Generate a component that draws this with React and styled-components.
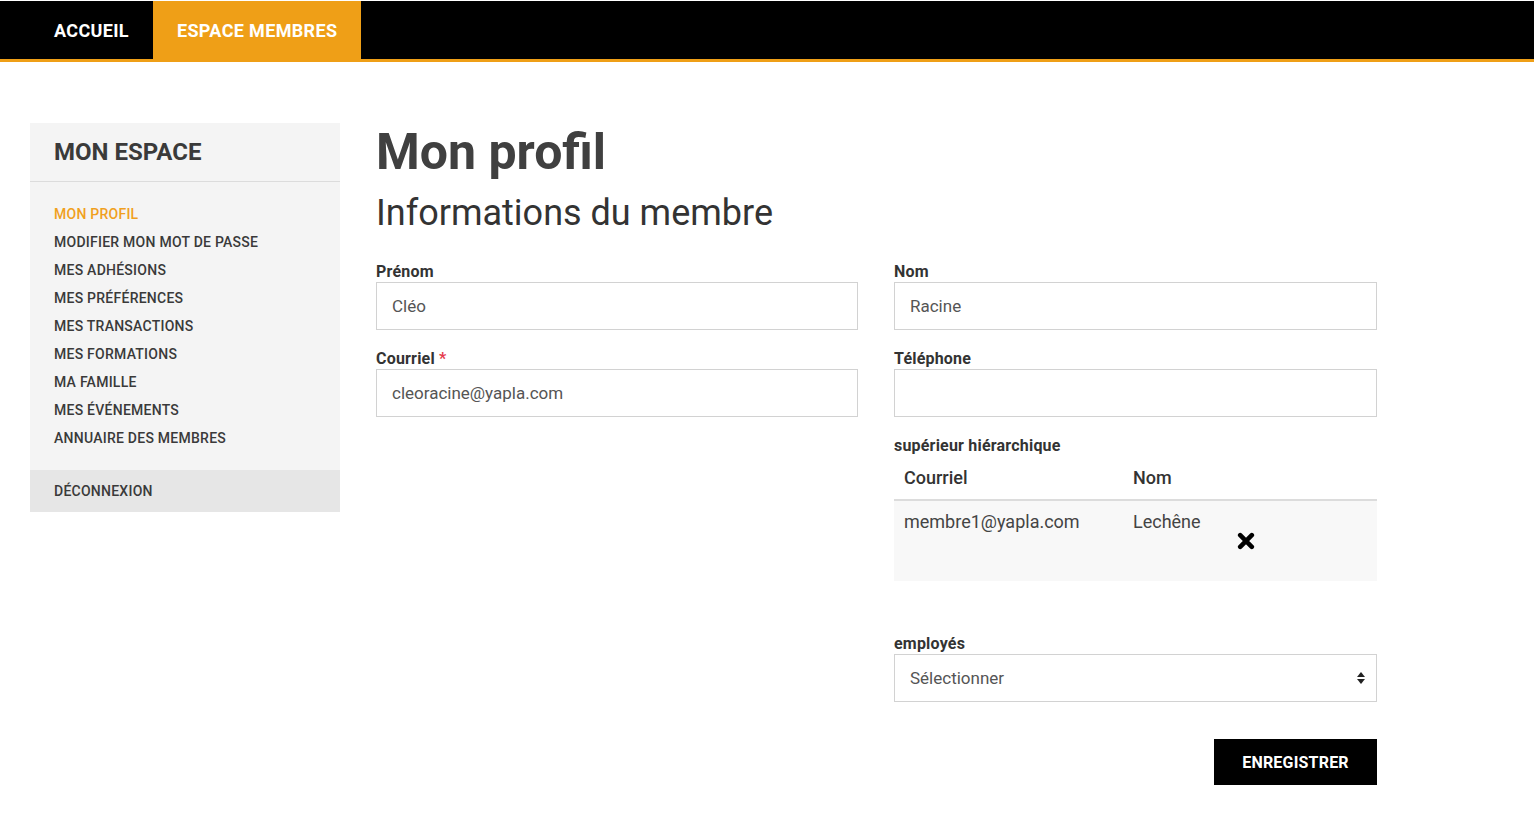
import React from "react";
import styled, { createGlobalStyle } from "styled-components";

const GlobalStyle = createGlobalStyle`
  body {
    margin: 0;
    font-family: Roboto, "Liberation Sans", Arial, sans-serif;
    color: #333;
    background: #fff;
  }
  * { box-sizing: border-box; }
`;

const menuItems = [
  "Mon profil",
  "Modifier mon mot de passe",
  "Mes adhésions",
  "Mes préférences",
  "Mes transactions",
  "Mes formations",
  "Ma famille",
  "Mes événements",
  "Annuaire des membres",
];

const App = () => {
  return (
    <>
      <GlobalStyle />
      <NavBar>
        <NavLink>Accueil</NavLink>
        <NavLink active>Espace membres</NavLink>
      </NavBar>
      <Page>
        <Sidebar>
          <SidebarTitle>Mon espace</SidebarTitle>
          <Menu>
            {menuItems.map((item, i) => (
              <MenuItem key={item} active={i === 0}>
                {item}
              </MenuItem>
            ))}
          </Menu>
          <Logout>Déconnexion</Logout>
        </Sidebar>

        <Main>
          <Title>Mon profil</Title>
          <Subtitle>Informations du membre</Subtitle>
          <FormGrid>
            <Column>
              <Field>
                <Label>Prénom</Label>
                <Input defaultValue="Cléo" />
              </Field>
              <Field>
                <Label>
                  Courriel <Required>*</Required>
                </Label>
                <Input defaultValue="cleoracine@yapla.com" />
              </Field>
            </Column>
            <Column>
              <Field>
                <Label>Nom</Label>
                <Input defaultValue="Racine" />
              </Field>
              <Field>
                <Label>Téléphone</Label>
                <Input defaultValue="" />
              </Field>
              <Field>
                <Label>supérieur hiérarchique</Label>
                <Table>
                  <TableHead>
                    <Cell>Courriel</Cell>
                    <Cell>Nom</Cell>
                    <Cell />
                  </TableHead>
                  <TableRow>
                    <Cell>membre1@yapla.com</Cell>
                    <Cell>Lechêne</Cell>
                    <Cell>
                      <RemoveButton aria-label="Supprimer">
                        <svg width="18" height="18" viewBox="0 0 18 18">
                          <path
                            d="M3.2 3.2 L14.8 14.8 M14.8 3.2 L3.2 14.8"
                            stroke="#000"
                            strokeWidth="4.6"
                            strokeLinecap="round"
                          />
                        </svg>
                      </RemoveButton>
                    </Cell>
                  </TableRow>
                </Table>
              </Field>
              <Field spaced>
                <Label>employés</Label>
                <SelectWrap>
                  <Select defaultValue="">
                    <option value="">Sélectionner</option>
                  </Select>
                  <SelectArrows width="8" height="12" viewBox="0 0 8 12">
                    <path d="M4 0 L8 5 L0 5 Z" fill="#222" />
                    <path d="M0 7 L8 7 L4 12 Z" fill="#222" />
                  </SelectArrows>
                </SelectWrap>
              </Field>
              <Actions>
                <SaveButton>Enregistrer</SaveButton>
              </Actions>
            </Column>
          </FormGrid>
        </Main>
      </Page>
    </>
  );
};

const NavBar = styled.nav`
  display: flex;
  margin-top: 1px;
  height: 61px;
  padding-left: 30px;
  background: #000;
  border-bottom: 3px solid #ef9f17;
`;

const NavLink = styled.a`
  display: flex;
  align-items: center;
  padding: 0 24px;
  font-size: 18px;
  font-weight: 700;
  letter-spacing: 0.35px;
  text-transform: uppercase;
  color: #fff;
  background: ${(p) => (p.active ? "#ef9f17" : "transparent")};
  cursor: pointer;
`;

const Page = styled.div`
  display: flex;
  align-items: flex-start;
  gap: 36px;
  padding: 61px 30px 40px;
`;

const Sidebar = styled.aside`
  width: 310px;
  flex-shrink: 0;
  background: #f4f4f4;
`;

const SidebarTitle = styled.h2`
  margin: 0;
  height: 59px;
  display: flex;
  align-items: center;
  padding: 0 24px;
  font-size: 24px;
  font-weight: 700;
  text-transform: uppercase;
  color: #3a3a3a;
  border-bottom: 1px solid #dcdcdc;
`;

const Menu = styled.ul`
  list-style: none;
  margin: 0;
  padding: 18px 24px;
`;

const MenuItem = styled.li`
  line-height: 28px;
  font-size: 14px;
  font-weight: 500;
  letter-spacing: 0.25px;
  text-transform: uppercase;
  color: ${(p) => (p.active ? "#f0a01e" : "#3a3a3a")};
  cursor: pointer;
`;

const Logout = styled.div`
  height: 42px;
  display: flex;
  align-items: center;
  padding: 0 24px;
  background: #e6e6e6;
  font-size: 14px;
  font-weight: 500;
  letter-spacing: 0.25px;
  text-transform: uppercase;
  color: #3a3a3a;
  cursor: pointer;
`;

const Main = styled.main`
  width: 1001px;
`;

const Title = styled.h1`
  margin: 0;
  font-size: 50px;
  line-height: 58px;
  font-weight: 700;
  color: #404040;
`;

const Subtitle = styled.h2`
  margin: 11px 0 0;
  font-size: 36px;
  line-height: 42px;
  font-weight: 400;
  color: #333;
`;

const FormGrid = styled.div`
  display: grid;
  grid-template-columns: 482px 483px;
  gap: 36px;
  margin-top: 27px;
`;

const Column = styled.div`
  display: flex;
  flex-direction: column;
  gap: 18px;
`;

const Field = styled.div`
  display: flex;
  flex-direction: column;
  margin-top: ${(p) => (p.spaced ? "34px" : "0")};
`;

const Label = styled.label`
  font-size: 16px;
  line-height: 21px;
  font-weight: 700;
  letter-spacing: 0.2px;
  color: #333;
`;

const Required = styled.span`
  color: #e53b4c;
`;

const Input = styled.input`
  height: 48px;
  width: 100%;
  padding: 0 15px;
  border: 1px solid #d2d2d2;
  border-radius: 0;
  font-family: inherit;
  font-size: 17px;
  color: #555;
  background: #fff;
  outline: none;
`;

const Table = styled.div`
  display: flex;
  flex-direction: column;
`;

const TableHead = styled.div`
  display: grid;
  grid-template-columns: 229px 104px 1fr;
  height: 45px;
  align-items: center;
  border-bottom: 2px solid #dcdcdc;
  font-size: 18px;
  font-weight: 500;
  color: #333;
`;

const TableRow = styled.div`
  display: grid;
  grid-template-columns: 229px 104px 1fr;
  height: 80px;
  align-items: start;
  padding-top: 10px;
  background: #f8f8f8;
  font-size: 18px;
  color: #444;
`;

const Cell = styled.div`
  padding: 0 10px;
  white-space: nowrap;
`;

const RemoveButton = styled.button`
  display: block;
  margin-top: 21px;
  padding: 0;
  border: 0;
  background: none;
  cursor: pointer;
`;

const SelectWrap = styled.div`
  position: relative;
`;

const Select = styled.select`
  appearance: none;
  height: 48px;
  width: 100%;
  padding: 0 15px;
  border: 1px solid #d2d2d2;
  border-radius: 0;
  font-family: inherit;
  font-size: 17px;
  color: #555;
  background: #fff;
  outline: none;
`;

const SelectArrows = styled.svg`
  position: absolute;
  right: 12px;
  top: 18px;
  pointer-events: none;
`;

const Actions = styled.div`
  display: flex;
  justify-content: flex-end;
  margin-top: 19px;
`;

const SaveButton = styled.button`
  width: 163px;
  height: 46px;
  border: 0;
  border-radius: 0;
  background: #000;
  color: #fff;
  font-family: inherit;
  font-size: 16px;
  font-weight: 700;
  letter-spacing: 0.2px;
  text-transform: uppercase;
  cursor: pointer;
`;

export default App;
